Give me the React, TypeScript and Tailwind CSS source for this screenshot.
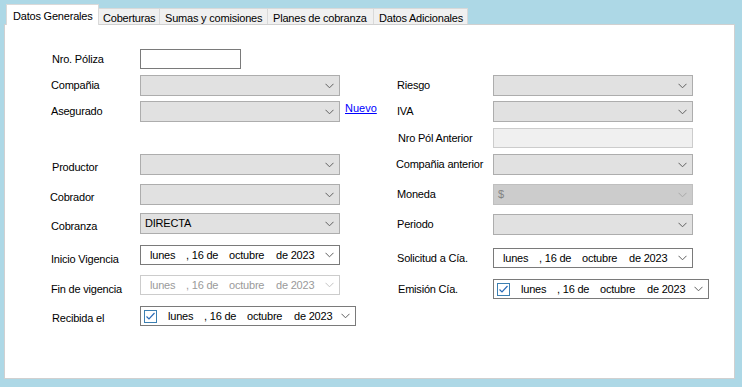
import React from "react";

function Chevron({ color = "#606060" }: { color?: string }) {
  return (
    <svg width="9" height="6" viewBox="0 0 9 6" className="shrink-0">
      <polyline points="0.5,0.8 4.5,4.8 8.5,0.8" fill="none" stroke={color} strokeWidth="1" />
    </svg>
  );
}

function Combo({ text, disabled }: { text?: string; disabled?: boolean }) {
  return (
    <div
      className={
        disabled
          ? "flex items-center justify-between h-[21px] w-[200px] border border-[#bfbfbf] bg-[#cccccc] pl-[4px] pr-[5px] text-[#838383]"
          : "flex items-center justify-between h-[21px] w-[200px] border border-[#adadad] bg-[#e1e1e1] pl-[4px] pr-[5px] text-black"
      }
    >
      <span>{text}</span>
      <Chevron color={disabled ? "#a9a9a9" : "#606060"} />
    </div>
  );
}

function CheckBox() {
  return (
    <div className="w-[13px] h-[13px] border border-[#3c7fb1] bg-white flex items-center justify-center shrink-0 ml-[3px] mr-[11px]">
      <svg width="11" height="11" viewBox="0 0 11 11">
        <polyline points="1.5,5.5 4,8 9.5,2" fill="none" stroke="#2b6cb8" strokeWidth="1.2" />
      </svg>
    </div>
  );
}

function DatePicker({ checkbox, disabled }: { checkbox?: boolean; disabled?: boolean }) {
  return (
    <div
      className={
        (checkbox ? "w-[216px] " : "w-[200px] pl-[9px] ") +
        (disabled
          ? "flex items-center h-[20px] border border-[#cccccc] bg-white pr-[5px] text-[#9a9a9a]"
          : "flex items-center h-[20px] border border-[#7a7a7a] bg-white pr-[5px] text-black")
      }
    >
      {checkbox && <CheckBox />}
      <span className="w-[36px] shrink-0">lunes</span>
      <span className="w-[43px] shrink-0">, 16 de</span>
      <span className="w-[47px] shrink-0">octubre</span>
      <span className="flex-1">de 2023</span>
      <Chevron color={disabled ? "#c4c4c4" : "#606060"} />
    </div>
  );
}

export default function App() {
  return (
    <div className="w-[742px] h-[387px] bg-[#add8e6] pt-[4px] pl-[4px] font-['Liberation_Sans',Arial,sans-serif] text-[11px] tracking-[-0.2px] text-black leading-none overflow-hidden">
      {/* Tab strip */}
      <div className="flex items-end h-[20px] pl-[2px] relative z-10">
        <div className="h-[21px] w-[93px] bg-white border-l border-t border-r border-[#d9d9d9] pl-[6px] pt-[6px] -mb-[1px]">
          Datos Generales
        </div>
        <div className="h-[16px] w-[61px] bg-[#f0f0f0] border-t border-r border-[#d9d9d9] pl-[4px] pt-[4px]">
          Coberturas
        </div>
        <div className="h-[16px] w-[108px] bg-[#f0f0f0] border-t border-r border-[#d9d9d9] pl-[5px] pt-[4px]">
          Sumas y comisiones
        </div>
        <div className="h-[16px] w-[106px] bg-[#f0f0f0] border-t border-r border-[#d9d9d9] pl-[5px] pt-[4px]">
          Planes de cobranza
        </div>
        <div className="h-[16px] w-[94px] bg-[#f0f0f0] border-t border-r border-[#d9d9d9] pl-[5px] pt-[4px]">
          Datos Adicionales
        </div>
      </div>

      {/* Panel */}
      <div className="w-[731px] h-[355px] bg-white border border-[#d0d0d0] flex">
        {/* Left column */}
        <div className="w-[392px] shrink-0 pl-[46px] pt-[24px] flex flex-col">
          <div className="flex items-center h-[20px]">
            <span className="w-[89px] pl-[1px] shrink-0">Nro. Póliza</span>
            <div className="w-[101px] h-[20px] border border-[#7a7a7a] bg-white" />
          </div>
          <div className="flex items-center h-[21px] mt-[6px]">
            <span className="w-[89px] shrink-0">Compañia</span>
            <Combo />
          </div>
          <div className="flex items-center h-[21px] mt-[5px]">
            <span className="w-[89px] shrink-0">Asegurado</span>
            <Combo />
            <span className="ml-[5px] pb-[6px] text-[#0000ff] underline tracking-normal">Nuevo</span>
          </div>
          <div className="flex items-center h-[21px] mt-[32px]">
            <span className="w-[89px] pl-[1px] pt-[6px] shrink-0">Productor</span>
            <Combo />
          </div>
          <div className="flex items-center h-[21px] mt-[9px]">
            <span className="w-[90px] -ml-[1px] pt-[5px] shrink-0">Cobrador</span>
            <Combo />
          </div>
          <div className="flex items-center h-[21px] mt-[8px]">
            <span className="w-[89px] pt-[5px] shrink-0">Cobranza</span>
            <Combo text="DIRECTA" />
          </div>
          <div className="flex items-center h-[20px] mt-[11px]">
            <span className="w-[89px] pt-[8px] shrink-0">Inicio Vigencia</span>
            <DatePicker />
          </div>
          <div className="flex items-center h-[20px] mt-[10px]">
            <span className="w-[89px] pt-[8px] shrink-0">Fin de vigencia</span>
            <DatePicker disabled />
          </div>
          <div className="flex items-center h-[20px] mt-[11px]">
            <span className="w-[89px] pl-[1px] pt-[5px] shrink-0">Recibida el</span>
            <DatePicker checkbox />
          </div>
        </div>

        {/* Right column */}
        <div className="flex-1 pt-[50px] flex flex-col">
          <div className="flex items-center h-[21px]">
            <span className="w-[96px] shrink-0">Riesgo</span>
            <Combo />
          </div>
          <div className="flex items-center h-[21px] mt-[5px]">
            <span className="w-[96px] shrink-0">IVA</span>
            <Combo />
          </div>
          <div className="flex items-center h-[20px] mt-[6px]">
            <span className="w-[96px] pl-[1px] shrink-0">Nro Pól Anterior</span>
            <div className="w-[200px] h-[20px] border border-[#cccccc] bg-[#f0f0f0]" />
          </div>
          <div className="flex items-center h-[21px] mt-[6px]">
            <span className="w-[97px] -ml-[1px] shrink-0">Compañia anterior</span>
            <Combo />
          </div>
          <div className="flex items-center h-[21px] mt-[9px]">
            <span className="w-[96px] shrink-0">Moneda</span>
            <Combo text="$" disabled />
          </div>
          <div className="flex items-center h-[21px] mt-[9px]">
            <span className="w-[96px] shrink-0">Periodo</span>
            <Combo />
          </div>
          <div className="flex items-center h-[20px] mt-[13px]">
            <span className="w-[96px] shrink-0">Solicitud a Cía.</span>
            <DatePicker />
          </div>
          <div className="flex items-center h-[20px] mt-[11px]">
            <span className="w-[96px] pl-[1px] shrink-0">Emisión Cía.</span>
            <DatePicker checkbox />
          </div>
        </div>
      </div>
    </div>
  );
}
